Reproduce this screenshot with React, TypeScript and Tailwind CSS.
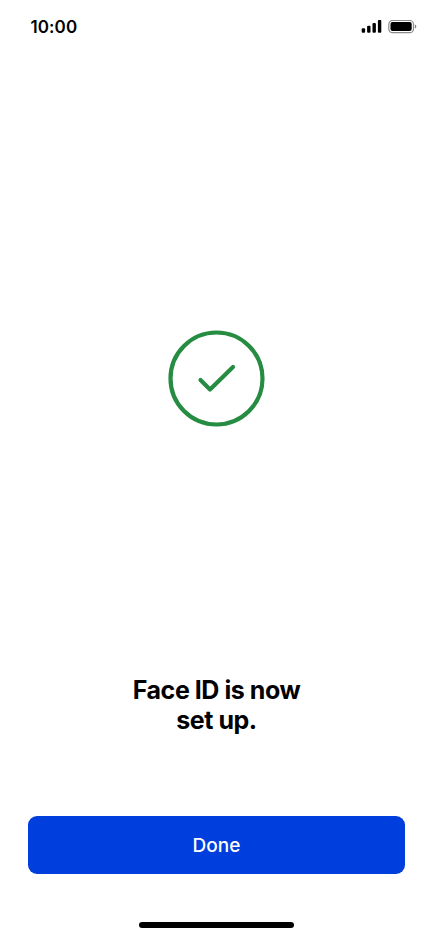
function StatusBar() {
  return (
    <header className="flex h-[54px] w-full items-center justify-between pl-[30.5px] pr-4">
      <span className="text-[17px] font-semibold leading-5 tracking-[0.1px]">10:00</span>
      <div className="flex items-center gap-[6px]">
        <svg width="21" height="14" viewBox="0 0 21 14" fill="currentColor">
          <rect x="0.7" y="8.2" width="3.4" height="4.6" rx="1" />
          <rect x="6.1" y="5.8" width="3.4" height="7" rx="1" />
          <rect x="11.5" y="3" width="3.4" height="9.8" rx="1" />
          <rect x="16.9" y="0" width="3.4" height="12.8" rx="1" />
        </svg>
        <svg width="29" height="14" viewBox="0 0 29 14" fill="currentColor">
          <rect x="0.8" y="0.5" width="24.7" height="12.2" rx="3.7" fill="none" stroke="currentColor" strokeWidth="1.2" opacity="0.45" />
          <rect x="2.5" y="2.1" width="21.2" height="9" rx="2" />
          <path d="M26.9 4.6v4c.8-.3 1.400-1.100 1.400-2s-.6-1.700-1.400-2Z" opacity="0.5" />
        </svg>
      </div>
    </header>
  )
}

export default function App() {
  return (
    <div className="flex h-[937px] w-[433px] flex-col items-center bg-white font-['Inter',sans-serif] text-black">
      <StatusBar />
      <main className="flex w-full flex-col items-center px-7 pt-[276px]">
        <svg width="97" height="97" viewBox="0 0 97 97" fill="none" stroke="#258c41">
          <circle cx="48.5" cy="48.5" r="46" strokeWidth="4.2" />
          <path d="M32.5 50 42 59.5 65 37" strokeWidth="4.2" strokeLinecap="round" strokeLinejoin="round" />
        </svg>
        <h1 className="mt-[248px] text-center text-[25px] font-bold leading-[30px] tracking-[-0.45px]">
          Face ID is now
          <br />
          set up.
        </h1>
        <button className="mt-[81px] h-[58px] w-full rounded-[9px] bg-[#003fdd] pt-0.5 text-[19px] font-medium text-white">Done</button>
      </main>
      <div className="mt-12 h-[6px] w-[155px] rounded-full bg-black" />
    </div>
  )
}
